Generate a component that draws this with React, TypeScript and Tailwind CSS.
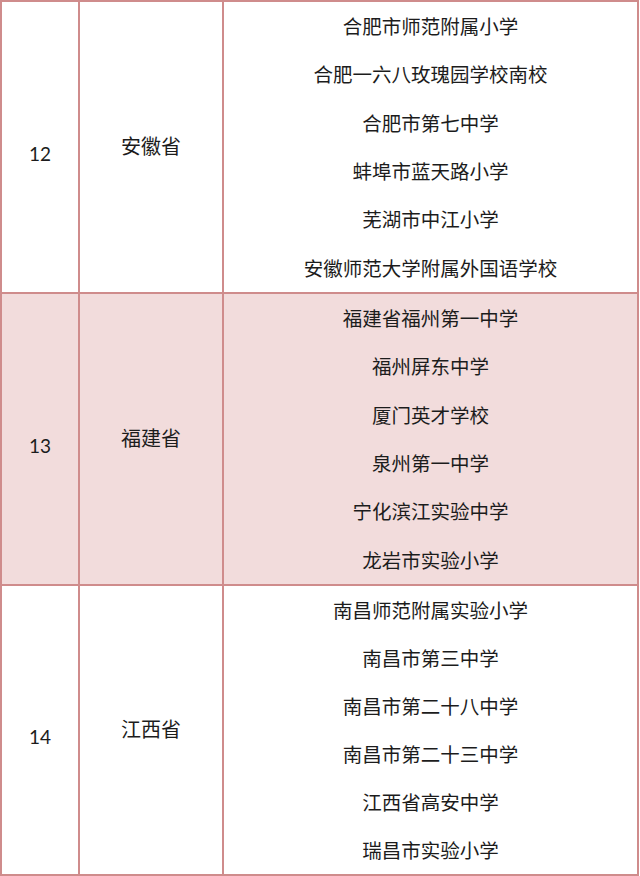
import React from "react";

const rows = [
  {
    n: "12",
    p: "安徽省",
    bg: "bg-white",
    h: "h-[292px]",
    s: ["合肥市师范附属小学", "合肥一六八玫瑰园学校南校", "合肥市第七中学", "蚌埠市蓝天路小学", "芜湖市中江小学", "安徽师范大学附属外国语学校"],
  },
  {
    n: "13",
    p: "福建省",
    bg: "bg-[#f2dcdc]",
    h: "h-[292px]",
    s: ["福建省福州第一中学", "福州屏东中学", "厦门英才学校", "泉州第一中学", "宁化滨江实验中学", "龙岩市实验小学"],
  },
  {
    n: "14",
    p: "江西省",
    bg: "bg-white",
    h: "h-[290px]",
    s: ["南昌师范附属实验小学", "南昌市第三中学", "南昌市第二十八中学", "南昌市第二十三中学", "江西省高安中学", "瑞昌市实验小学"],
  },
];

export default function App() {
  return (
    <div className="w-[640px] h-[876px] overflow-hidden bg-white">
      <div className="w-[639px] border-t-2 border-l-2 border-r-2 border-[#cf8c8c] text-[#1c1c1c]" style={{ fontFamily: '"Noto Sans CJK SC", "Noto Sans", sans-serif' }}>
        {rows.map((r) => (
          <div key={r.n} className={`grid grid-cols-[78px_144px_1fr] ${r.h} border-b-2 border-[#cf8c8c] ${r.bg}`}>
            <div className="flex items-center justify-center border-r-2 border-[#cf8c8c] pt-[14px] text-[19px]" style={{ fontFamily: 'Lato, "Open Sans", sans-serif' }}>
              {r.n}
            </div>
            <div className="flex items-center justify-center border-r-2 border-[#cf8c8c] pb-[2px] text-[20px]">{r.p}</div>
            <div className="flex flex-col">
              {r.s.map((x) => (
                <div key={x} className="flex-1 flex items-center justify-center pb-[1px] text-[19.5px] leading-none">
                  {x}
                </div>
              ))}
            </div>
          </div>
        ))}
      </div>
    </div>
  );
}
